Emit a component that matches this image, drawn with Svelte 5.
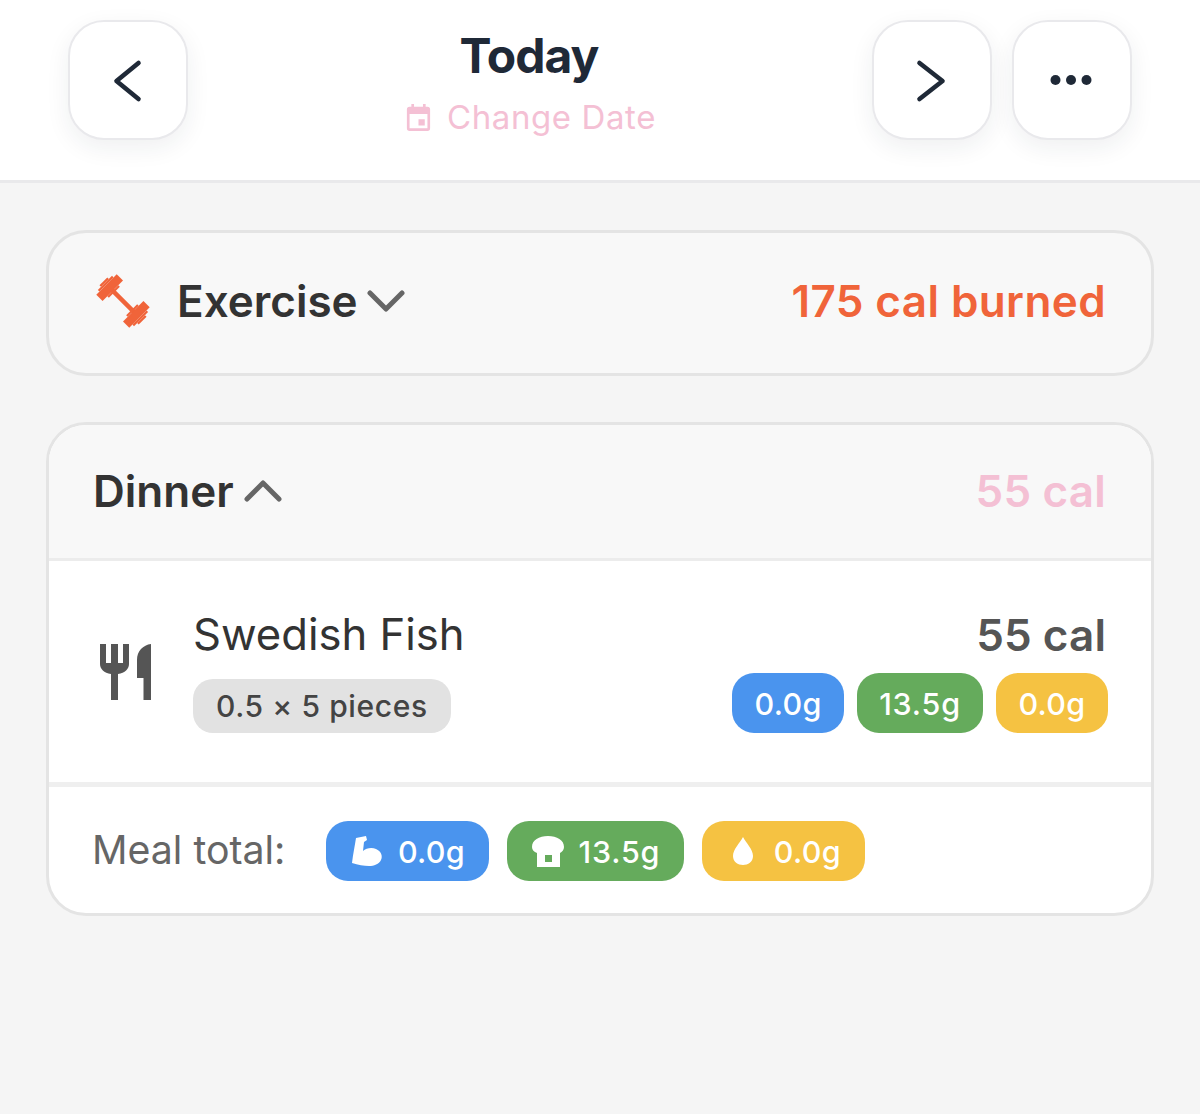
<script>
  const macros = [
    { cls: 'protein', item: '0.0g', total: '0.0g', icon: 'muscle' },
    { cls: 'carbs', item: '13.5g', total: '13.5g', icon: 'bread' },
    { cls: 'fat', item: '0.0g', total: '0.0g', icon: 'drop' }
  ];
</script>

<div class="page">
  <header class="topbar">
    <button class="square" aria-label="Previous day">
      <svg width="40" height="52" viewBox="0 0 40 52"><path d="M30.5 9 L8.5 27 L30.5 45" /></svg>
    </button>
    <div class="title">
      <div class="today">Today</div>
      <div class="change">
        <svg width="25" height="29" viewBox="0 0 28 32">
          <path class="cal" fill-rule="evenodd" d="M6 1h3v3h10V1h3v3h2a3 3 0 0 1 3 3v21a3 3 0 0 1-3 3H4a3 3 0 0 1-3-3V7a3 3 0 0 1 3-3h2zM4 12v16h20V12zM14 18h7v7h-7z" />
        </svg>
        <span>Change Date</span>
      </div>
    </div>
    <div class="right">
      <button class="square" aria-label="Next day">
        <svg width="40" height="52" viewBox="0 0 40 52"><path d="M7.5 9 L30.5 27 L7.5 45" /></svg>
      </button>
      <button class="square" aria-label="More">
        <svg width="44" height="12" viewBox="0 0 44 12">
          <circle class="dot" cx="5.5" cy="6" r="5" /><circle class="dot" cx="21" cy="6" r="5" /><circle class="dot" cx="36.5" cy="6" r="5" />
        </svg>
      </button>
    </div>
  </header>

  <main class="content">
    <section class="card exercise">
      <svg class="barbell" width="60" height="60" viewBox="0 0 54 54">
        <g fill="#f0643a" transform="rotate(45 27 27)">
          <rect x="10" y="25" width="34" height="4" />
          <rect x="6" y="14" width="8" height="26" />
          <rect x="4" y="18" width="2" height="18" />
          <rect x="2" y="22" width="2" height="10" />
          <rect x="14" y="20" width="2" height="14" />
          <rect x="40" y="14" width="8" height="26" />
          <rect x="48" y="18" width="2" height="18" />
          <rect x="50" y="22" width="2" height="10" />
          <rect x="38" y="20" width="2" height="14" />
        </g>
      </svg>
      <span class="heading">Exercise</span>
      <svg class="chev" width="38" height="24" viewBox="0 0 38 24"><path d="M3 4 L19 20 L35 4" /></svg>
      <span class="burned">175 cal burned</span>
    </section>

    <section class="card dinner">
      <div class="dinner-head">
        <span class="heading">Dinner</span>
        <svg class="chev" width="38" height="24" viewBox="0 0 38 24"><path d="M3 20 L19 4 L35 20" /></svg>
        <span class="meal-cal">55 cal</span>
      </div>

      <div class="food">
        <svg class="cutlery" width="54" height="58" viewBox="0 0 54 58">
          <path fill="#555" d="M1 1h6v19h5V1h7v19h5V1h6v20c0 5-4 9-11 10v26h-7V31C5 30 1 26 1 21zM52 1v56h-7.500V35H38V17C38 8 44 2 52 1z" />
        </svg>
        <div class="food-main">
          <div class="food-name">Swedish Fish</div>
          <div class="serving">0.5 × 5 pieces</div>
        </div>
        <div class="food-side">
          <div class="food-cal">55 cal</div>
          <div class="pills">
            {#each macros as m}
              <span class="pill small {m.cls}">{m.item}</span>
            {/each}
          </div>
        </div>
      </div>

      <div class="total">
        <span class="total-label">Meal total:</span>
        {#each macros as m}
          <span class="pill {m.cls}">
            <svg width="32" height="32" viewBox="0 0 32 32">
              {#if m.icon === 'muscle'}
                <path fill="#fff" d="M5 3 L15 1 L16 5 L13 7 L12 16 C15 13 21 12 25 14 C30 16 32 21 30 25 C28 29 23 31 18 31 C13 31 7 30 1 28 C2 19 4 10 5 3z" />
              {:else if m.icon === 'bread'}
                <path fill="#fff" fill-rule="evenodd" d="M16 1C25 1 32 5 32 12C32 15 30 17 28 18V32H5V18C2 17 0 15 0 12C0 5 7 1 16 1zM13 20v7h7v-7z" />
              {:else}
                <path fill="#fff" d="M16 2 C19 8 26 14 26 21 C26 27 21 30 16 30 C11 30 6 27 6 21 C6 14 13 8 16 2z" />
              {/if}
            </svg>
            <span>{m.total}</span>
          </span>
        {/each}
      </div>
    </section>
  </main>
</div>

<style>
  :global(body) {
    margin: 0;
    background: #f5f5f5;
  }

  .page {
    height: 1114px;
    overflow: hidden;
    font-family: Inter, "Liberation Sans", sans-serif;
    background: #f5f5f5;
  }

  .topbar {
    box-sizing: border-box;
    height: 183px;
    padding: 20px 68px 0;
    display: flex;
    align-items: flex-start;
    background: #fff;
    border-bottom: 3px solid #e9e9eb;
  }

  .square {
    box-sizing: border-box;
    width: 120px;
    height: 120px;
    padding: 0;
    display: flex;
    align-items: center;
    justify-content: center;
    background: #fff;
    border: 2px solid #e9e9ec;
    border-radius: 36px;
    box-shadow: 0 8px 24px rgba(30, 40, 60, 0.07);
  }

  .square svg path {
    fill: none;
    stroke: #1f2937;
    stroke-width: 4.6;
    stroke-linecap: round;
    stroke-linejoin: round;
  }

  .dot {
    fill: #1f2937;
  }

  .title {
    flex: 1;
    display: flex;
    flex-direction: column;
    align-items: center;
  }

  .today {
    margin-top: 7px;
    margin-right: 2px;
    font-size: 48px;
    line-height: 58px;
    font-weight: 700;
    letter-spacing: -1px;
    color: #1f2937;
  }

  .change {
    margin-top: 12px;
    margin-left: 2px;
    display: flex;
    align-items: center;
    gap: 16px;
    font-size: 33px;
    line-height: 40px;
    color: #f4c0d4;
    letter-spacing: 0.6px;
  }

  .cal {
    fill: #f4c0d4;
  }

  .right {
    display: flex;
    gap: 20px;
  }

  .content {
    padding: 47px 46px 0;
    display: flex;
    flex-direction: column;
    gap: 46px;
  }

  .card {
    box-sizing: border-box;
    border: 3px solid #e4e4e4;
    border-radius: 40px;
    background: #fff;
    overflow: hidden;
  }

  .exercise {
    height: 146px;
    padding: 0 45px 4px 47px;
    display: flex;
    align-items: center;
    background: #f8f8f8;
  }

  .barbell {
    margin: 0 24px 0 -3px;
  }

  .heading {
    font-size: 44px;
    font-weight: 600;
    color: #333;
  }

  .chev {
    margin-left: 9px;
    fill: none;
    stroke: #666;
    stroke-width: 5;
    stroke-linecap: round;
    stroke-linejoin: round;
  }

  .dinner-head .chev {
    margin-left: 10px;
  }

  .burned {
    margin-left: auto;
    font-size: 44px;
    font-weight: 600;
    letter-spacing: 0.4px;
    color: #f0643a;
  }

  .dinner {
    height: 494px;
  }

  .dinner-head {
    box-sizing: border-box;
    height: 136px;
    padding: 0 45px 2px 44px;
    display: flex;
    align-items: center;
    background: #f8f8f8;
    border-bottom: 3px solid #ececec;
  }

  .meal-cal {
    margin-left: auto;
    font-size: 44px;
    font-weight: 600;
    letter-spacing: 0.2px;
    color: #f4c0d4;
  }

  .food {
    box-sizing: border-box;
    height: 226px;
    padding: 0 43px 0 50px;
    display: flex;
    align-items: center;
    border-bottom: 5px solid #efefef;
  }

  .cutlery {
    margin-right: 40px;
  }

  .food-main {
    flex: 1;
    margin-top: -3px;
  }

  .food-name {
    font-size: 43.6px;
    line-height: 54px;
    color: #333;
  }

  .serving {
    display: inline-block;
    margin-top: 17px;
    padding: 0 23px;
    height: 54px;
    line-height: 54px;
    border-radius: 20px;
    background: #e2e2e2;
    color: #444;
    font-size: 30px;
    letter-spacing: 0.6px;
    font-weight: 500;
  }

  .food-side {
    display: flex;
    flex-direction: column;
    align-items: flex-end;
    margin-top: -2px;
  }

  .food-cal {
    font-size: 44px;
    line-height: 54px;
    font-weight: 600;
    letter-spacing: 0.1px;
    color: #555;
    margin-right: 2px;
  }

  .pills {
    display: flex;
    gap: 12.5px;
    margin-top: 11px;
  }

  .pill {
    box-sizing: border-box;
    height: 60px;
    padding: 0 24px 0 25px;
    display: inline-flex;
    align-items: center;
    gap: 15px;
    border-radius: 22px;
    color: #fff;
    font-size: 30.5px;
    font-weight: 500;
    letter-spacing: 0.3px;
  }

  .pill.small {
    padding: 0 22.5px;
  }

  .protein {
    background: #4a94ee;
  }

  .carbs {
    background: #65ab5c;
    letter-spacing: 0.8px;
  }

  .fat {
    background: #f5c242;
  }

  .total {
    box-sizing: border-box;
    display: flex;
    align-items: center;
    gap: 17.5px;
    height: 126px;
    padding: 2px 45px 0 43px;
  }

  .total-label {
    font-size: 39.3px;
    color: #666;
    margin: -3px 23px 0 0;
  }
</style>
